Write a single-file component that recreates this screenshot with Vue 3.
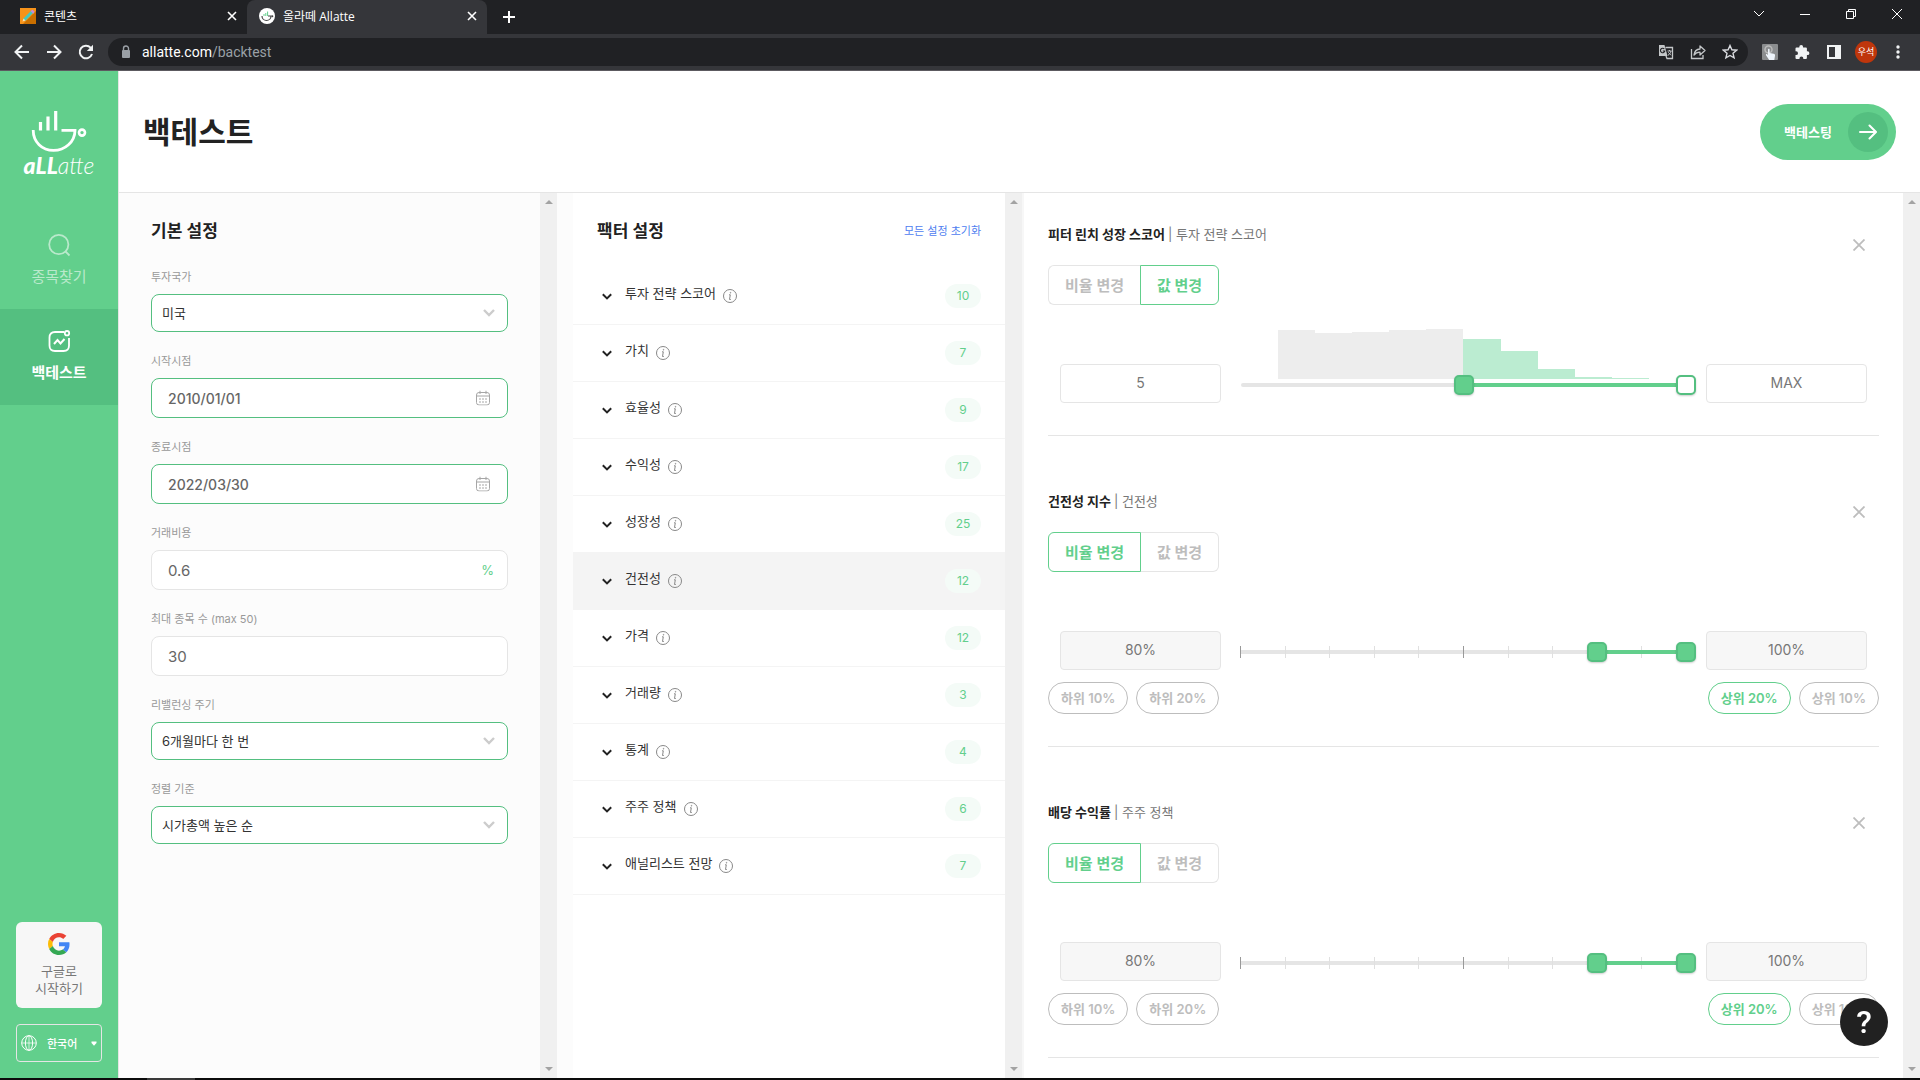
<script setup>
import { ref } from 'vue'

const fields = ref([
  { id: 'country', label: '투자국가', type: 'select', value: '미국' },
  { id: 'start', label: '시작시점', type: 'date', value: '2010/01/01' },
  { id: 'end', label: '종료시점', type: 'date', value: '2022/03/30' },
  { id: 'fee', label: '거래비용', type: 'number', value: '0.6', unit: '%' },
  { id: 'count', label: '최대 종목 수 (max 50)', type: 'number', value: '30' },
  { id: 'rebalance', label: '리밸런싱 주기', type: 'select', value: '6개월마다 한 번' },
  { id: 'sort', label: '정렬 기준', type: 'select', value: '시가총액 높은 순' },
])

const factors = [
  { name: '투자 전략 스코어', count: 10 },
  { name: '가치', count: 7 },
  { name: '효율성', count: 9 },
  { name: '수익성', count: 17 },
  { name: '성장성', count: 25 },
  { name: '건전성', count: 12, active: true },
  { name: '가격', count: 12 },
  { name: '거래량', count: 3 },
  { name: '통계', count: 4 },
  { name: '주주 정책', count: 6 },
  { name: '애널리스트 전망', count: 7 },
]

const filters = ref([
  {
    id: 'lynch', name: '피터 린치 성장 스코어', group: '투자 전략 스코어', mode: 'value',
    low: 50, high: 100, lowText: '5', highText: 'MAX',
    bars: [49, 46, 47, 49, 50, 40, 28, 10, 2, 1],
  },
  { id: 'health', name: '건전성 지수', group: '건전성', mode: 'ratio', low: 80, high: 100, lowText: '80%', highText: '100%' },
  { id: 'dividend', name: '배당 수익률', group: '주주 정책', mode: 'ratio', low: 80, high: 100, lowText: '80%', highText: '100%' },
])
</script>

<template>
  <div class="window">
    <div class="tabstrip">
      <div class="tab">
        <svg class="favicon" viewBox="0 0 16 16">
          <rect width="16" height="16" fill="#f7931a" />
          <path d="M16 3v13H3z" fill="#c96f00" />
          <path d="M4 12 12 4" stroke="#45c8c0" stroke-width="3" />
          <path d="m10.500 3 2-1.200 2 2-1.200 2z" fill="#c48be0" />
          <path d="m2.500 13.500 1-3 2 2z" fill="#fbe2b5" />
        </svg>
        <span class="tab-title">콘텐츠</span>
        <button class="tab-close" aria-label="탭 닫기"><svg width="10" height="10" viewBox="0 0 10 10"><path d="m1 1 8 8M9 1 1 9" /></svg></button>
      </div>
      <div class="tab current">
        <svg class="favicon" viewBox="0 0 16 16">
          <circle cx="8" cy="8" r="8" fill="#fff" />
          <path d="M3 8a4.500 4.500 0 0 0 9 0H9" fill="none" stroke="#444" stroke-width="1.200" />
          <path d="M5 8V6M6.800 8V5M8.600 8V3.500" stroke="#62cf8c" stroke-width="1" />
          <circle cx="13.300" cy="8.300" r="1" fill="#444" />
        </svg>
        <span class="tab-title">올라떼 Allatte</span>
        <button class="tab-close" aria-label="탭 닫기"><svg width="10" height="10" viewBox="0 0 10 10"><path d="m1 1 8 8M9 1 1 9" /></svg></button>
      </div>
      <button class="tab-new" aria-label="새 탭"><svg width="12" height="12" viewBox="0 0 12 12"><path d="M6 0v12M0 6h12" stroke="#fff" stroke-width="2" /></svg></button>
      <div class="window-controls">
        <button aria-label="탭 검색"><svg width="12" height="12" viewBox="0 0 12 12"><path d="m1 3 5 5 5-5" /></svg></button>
        <button aria-label="최소화"><svg width="12" height="12" viewBox="0 0 12 12"><path d="M1 6.500h10" /></svg></button>
        <button aria-label="이전 크기로"><svg width="12" height="12" viewBox="0 0 12 12"><path d="M1.500 3.500h7v7h-7zM3.500 3V1.500h7v7H9" /></svg></button>
        <button aria-label="닫기"><svg width="12" height="12" viewBox="0 0 12 12"><path d="m1 1 10 10M11 1 1 11" /></svg></button>
      </div>
    </div>

    <div class="toolbar">
      <button aria-label="뒤로"><svg width="16" height="16" viewBox="0 0 16 16"><path d="M15 8H2M8 1.500 1.500 8 8 14.500" class="stroke-w" /></svg></button>
      <button aria-label="앞으로"><svg width="16" height="16" viewBox="0 0 16 16"><path d="M1 8h13M8 1.500 14.500 8 8 14.500" class="stroke-w" /></svg></button>
      <button aria-label="새로고침"><svg width="16" height="16" viewBox="0 0 16 16"><path d="M14 10A6.300 6.300 0 1 1 12.600 3.600L14 5" class="stroke-w" /><path d="M15 .800V7H8.800z" fill="#f1f3f4" /></svg></button>
      <div class="address">
        <svg width="16" height="16" viewBox="0 0 16 16"><rect x="4" y="6" width="8" height="8" rx="1" fill="#9aa0a6" /><path d="M5.500 6.500V4.500a2.500 2.500 0 0 1 5 0v2" fill="none" stroke="#9aa0a6" stroke-width="1.400" /></svg>
        <span class="url"><b>allatte.com</b>/backtest</span>
        <svg width="16" height="16" viewBox="0 0 16 16"><path d="M1 1h5.500L9.500 12H1z" fill="#c4c7c9" /><path d="M7.500 3.500h7v11H9l-1-2.500" fill="none" stroke="#c4c7c9" stroke-width="1.300" /><path d="M6.300 5A2.200 2.200 0 1 0 6.800 7H4.800" fill="none" stroke="#202124" stroke-width="1.100" /><path d="M9.500 7h4M11.500 6v1M13 7c-.500 2-1.500 3.300-3 4.300M10.300 8.300l2.700 3" fill="none" stroke="#c4c7c9" /></svg>
        <svg width="16" height="16" viewBox="0 0 16 16"><path d="M1.500 5v9.500H13V11" fill="none" stroke="#c4c7c9" stroke-width="1.300" /><path d="M10 2v3C6.500 5.200 4.500 7.300 4 11c1.500-2 3.300-2.800 6-2.800V11l5-4.500z" fill="none" stroke="#c4c7c9" stroke-width="1.300" stroke-linejoin="round" /></svg>
        <svg width="16" height="16" viewBox="0 0 16 16"><path d="m8 1.500 1.900 4.300 4.700.4-3.600 3.100 1.100 4.600L8 11.500l-4.100 2.400L5 9.300 1.400 6.200l4.700-.4z" fill="none" stroke="#dadce0" stroke-width="1.400" /></svg>
      </div>
      <div class="extensions">
        <button aria-label="확장"><svg width="16" height="16" viewBox="0 0 16 16"><rect width="16" height="16" rx="1" fill="#8b8d8f" /><circle cx="6.500" cy="5.500" r="3.500" fill="none" stroke="#bbb" stroke-width="1.500" /><path d="M6 5.500c0-1 1.600-1 1.600 0V9l4 .8c1.300.3 1.600 1 1.400 2L12.300 16H7.200L4 11.300c-.4-1 .5-1.500 1.200-1l.8.700z" fill="#eef4fb" /></svg></button>
        <button aria-label="확장 프로그램"><svg width="16" height="16" viewBox="0 0 16 16"><path d="M1.500 4.500A1 1 0 0 1 2.500 3.500H5.300V2.900a1.900 1.900 0 0 1 3.800 0v.6h2.800a1 1 0 0 1 1 1v2.800h.6a1.900 1.900 0 0 1 0 3.800h-.6V14a1 1 0 0 1-1 1H9.300v-.7a1.900 1.900 0 0 0-3.800 0v.7h-3a1 1 0 0 1-1-1v-2.900h.6a1.900 1.900 0 0 0 0-3.800h-.6z" fill="#f1f3f4" /></svg></button>
        <button aria-label="측면 패널"><svg width="16" height="16" viewBox="0 0 16 16"><path d="M1 1h14v14H1zM3 3v10h6V3z" fill="#f1f3f4" fill-rule="evenodd" /></svg></button>
        <button class="avatar">우석</button>
        <button aria-label="메뉴"><svg width="16" height="16" viewBox="0 0 16 16" fill="#f1f3f4"><circle cx="8" cy="3" r="1.700" /><circle cx="8" cy="8" r="1.700" /><circle cx="8" cy="13" r="1.700" /></svg></button>
      </div>
    </div>

    <div class="app">
      <aside class="sidebar">
        <a class="logo" href="#">
          <svg width="56" height="42" viewBox="31 110 56 42" fill="none" stroke="#fff">
            <path d="M40.500 122v8.500M48 116.500v14M55.700 111v19.500" stroke-width="3.200" />
            <path d="M33.200 130C33.200 142 42 150.400 53.500 150.400S74.800 142 75 130.400H61.500" stroke-width="2.800" />
            <circle cx="82" cy="132.600" r="3" stroke-width="2.600" />
          </svg>
          <span class="wordmark"><b>aLL</b>atte</span>
        </a>
        <nav>
          <a class="nav-item" href="#">
            <svg width="24" height="24" viewBox="0 0 24 24" fill="none" stroke="currentColor" stroke-width="1.800"><circle cx="11.800" cy="11.500" r="9.600" /><path d="m18.500 18.500 4 4" /></svg>
            종목찾기
          </a>
          <a class="nav-item active" href="#">
            <svg width="24" height="24" viewBox="0 0 24 24" fill="none" stroke="currentColor" stroke-width="1.800"><path d="M17 3H8Q2.500 3 2.500 8.500v8Q2.500 22 8 22h8.500q5.500 0 5.500-5.500V9" /><circle cx="20" cy="4.200" r="2.200" /><path d="m7 15 3.500-4 3 3.500 4-4.500" stroke-width="2" /></svg>
            백테스트
          </a>
        </nav>
        <div class="side-bottom">
          <button class="google">
            <svg width="22" height="22" viewBox="0 0 48 48"><path fill="#EA4335" d="M24 9.500c3.540 0 6.710 1.220 9.210 3.600l6.850-6.850C35.900 2.380 30.470 0 24 0 14.620 0 6.510 5.380 2.560 13.220l7.980 6.190C12.430 13.720 17.740 9.500 24 9.500z" /><path fill="#4285F4" d="M46.980 24.550c0-1.570-.15-3.090-.38-4.550H24v9.020h12.940c-.58 2.960-2.260 5.480-4.780 7.180l7.730 6c4.510-4.180 7.090-10.360 7.090-17.650z" /><path fill="#FBBC05" d="M10.530 28.590c-.48-1.450-.76-2.990-.76-4.590s.27-3.140.76-4.590l-7.980-6.190C.92 16.460 0 20.120 0 24c0 3.880.92 7.540 2.560 10.780l7.970-6.190z" /><path fill="#34A853" d="M24 48c6.480 0 11.930-2.130 15.890-5.810l-7.730-6c-2.150 1.450-4.920 2.300-8.160 2.300-6.260 0-11.570-4.220-13.470-9.910l-7.980 6.190C6.510 42.620 14.620 48 24 48z" /></svg>
            <span>구글로<br />시작하기</span>
          </button>
          <button class="language">
            <svg width="16" height="16" viewBox="0 0 16 16" fill="none" stroke="#fff"><circle cx="8" cy="8" r="7.300" /><ellipse cx="8" cy="8" rx="3.600" ry="7.300" /><path d="M8 .7v14.600M.7 8h14.600" stroke-width=".7" /></svg>
            <span>한국어</span>
            <svg width="6" height="5" viewBox="0 0 6 5"><path d="M.5.500h5v1.500L3 4.800.5 2z" fill="#fff" /></svg>
          </button>
        </div>
      </aside>

      <main>
        <header class="page-head">
          <h1>백테스트</h1>
          <button class="run">
            백테스팅
            <span class="run-icon"><svg width="18" height="16" viewBox="0 0 18 16" fill="none" stroke="#fff" stroke-width="2" stroke-linecap="round" stroke-linejoin="round"><path d="M1 8h15.500M10.500 1.500 17 8l-6.500 6.500" /></svg></span>
          </button>
        </header>

        <div class="columns">
          <section class="basic">
            <form class="basic-body" @submit.prevent>
              <h2>기본 설정</h2>
              <div v-for="f in fields" :key="f.id" class="field">
                <label :for="f.id">{{ f.label }}</label>
                <div class="control" :class="f.type">
                  <select v-if="f.type === 'select'" :id="f.id" v-model="f.value">
                    <option>{{ f.value }}</option>
                  </select>
                  <input v-else :id="f.id" v-model="f.value" type="text" />
                  <svg v-if="f.type === 'select'" class="mark caret" width="12" height="8" viewBox="0 0 12 8"><path d="m1 1 5 5 5-5" fill="none" stroke="#ccc" stroke-width="2.400" /></svg>
                  <svg v-else-if="f.type === 'date'" class="mark cal" width="14" height="15" viewBox="0 0 14 15" fill="none" stroke="#a6a6a6"><rect x=".5" y="2" width="13" height="12.500" rx="2.500" /><path d="M.5 5.500h13M4 0v3.500M10 0v3.500" /><path d="M3 8.500h8M3 11.500h8" stroke-dasharray="2 1" /></svg>
                  <span v-else-if="f.unit" class="mark unit">{{ f.unit }}</span>
                </div>
              </div>
            </form>
            <div class="scroll"><svg width="8" height="4" viewBox="0 0 8 4"><path d="M0 4 4 0l4 4z" /></svg><svg width="8" height="4" viewBox="0 0 8 4"><path d="m0 0 4 4 4-4z" /></svg></div>
          </section>

          <section class="factors">
            <div class="factor-body">
              <div class="factor-head">
                <h2>팩터 설정</h2>
                <a href="#">모든 설정 초기화</a>
              </div>
              <ul>
                <li v-for="f in factors" :key="f.name" :class="{ active: f.active }">
                  <svg class="chev" width="10" height="7" viewBox="0 0 10 7"><path d="m.8 1.200 4.200 4.200 4.200-4.200" fill="none" stroke="#222" stroke-width="2" /></svg>
                  <span class="factor-name">{{ f.name }}</span>
                  <svg class="info" width="14" height="14" viewBox="0 0 14 14" fill="none" stroke="#888"><circle cx="7" cy="7" r="6.500" /><path d="M6 5.800h1.300L6.500 10.500h1.300" /><circle cx="7.500" cy="3.700" r=".5" fill="#888" stroke-width=".4" /></svg>
                  <span class="badge">{{ f.count }}</span>
                </li>
              </ul>
            </div>
            <div class="scroll"><svg width="8" height="4" viewBox="0 0 8 4"><path d="M0 4 4 0l4 4z" /></svg><svg width="8" height="4" viewBox="0 0 8 4"><path d="m0 0 4 4 4-4z" /></svg></div>
          </section>

          <section class="filters">
            <div class="filter-body">
              <article v-for="f in filters" :key="f.id">
                <h3>{{ f.name }} <span>| {{ f.group }}</span></h3>
                <button class="remove" aria-label="삭제"><svg width="12" height="12" viewBox="0 0 12 12"><path d="m.5.500 11 11M11.500.500l-11 11" stroke="#bdbdbd" stroke-width="1.800" /></svg></button>
                <div class="modes">
                  <button :class="{ on: f.mode === 'ratio' }" @click="f.mode = 'ratio'">비율 변경</button>
                  <button :class="{ on: f.mode === 'value' }" @click="f.mode = 'value'">값 변경</button>
                </div>
                <div class="range">
                  <input v-model="f.lowText" class="bound" :class="{ tinted: !f.bars }" type="text" aria-label="최솟값" />
                  <div class="slider" :class="{ round: f.bars }">
                    <div v-if="f.bars" class="bars">
                      <i v-for="(h, i) in f.bars" :key="i" :class="{ inside: i >= 5 }" :style="{ height: h + 'px' }"></i>
                    </div>
                    <div v-else class="ticks"><i v-for="n in 11" :key="n" :class="{ major: n === 1 || n === 6 }"></i></div>
                    <div class="fill" :style="{ left: f.low + '%', right: 100 - f.high + '%' }"></div>
                    <input v-model="f.low" class="handle" type="range" min="0" max="100" aria-label="하한" />
                    <input v-model="f.high" class="handle" :class="{ open: f.bars }" type="range" min="0" max="100" aria-label="상한" />
                  </div>
                  <input v-model="f.highText" class="bound" :class="{ tinted: !f.bars }" type="text" aria-label="최댓값" />
                </div>
                <div v-if="!f.bars" class="chips">
                  <button>하위 10%</button>
                  <button>하위 20%</button>
                  <button class="on push">상위 20%</button>
                  <button>상위 10%</button>
                </div>
              </article>
            </div>
            <div class="scroll"><svg width="8" height="4" viewBox="0 0 8 4"><path d="M0 4 4 0l4 4z" /></svg><svg width="8" height="4" viewBox="0 0 8 4"><path d="m0 0 4 4 4-4z" /></svg></div>
          </section>
        </div>
      </main>
    </div>
    <button class="help" aria-label="도움말">?</button>
    <div class="taskbar"><span></span></div>
  </div>
</template>

<style>
body {
  margin: 0;
}
</style>

<style scoped>
* {
  box-sizing: border-box;
}
.window {
  display: flex;
  flex-direction: column;
  min-height: 100vh;
  font-family: Inter, "Noto Sans CJK KR", sans-serif;
  font-size: 13px;
  color: #222;
  background: #fff;
}
button {
  padding: 0;
  border: 0;
  background: none;
  font: inherit;
  color: inherit;
  cursor: pointer;
}
svg {
  display: block;
  flex: none;
}
a {
  color: inherit;
  text-decoration: none;
}
h1, h2, h3, ul {
  margin: 0;
  padding: 0;
}

/* browser frame */
.tabstrip {
  display: flex;
  height: 34px;
  padding-left: 8px;
  background: #202124;
  color: #fff;
}
.tab {
  display: flex;
  align-items: center;
  width: 239px;
  padding: 0 8px 2px 12px;
  font-family: "Open Sans", "Noto Sans CJK KR", sans-serif;
  font-size: 12px;
}
.tab.current {
  width: 240px;
  border-radius: 8px 8px 0 0;
  background: #35363a;
}
.favicon {
  width: 16px;
  height: 16px;
}
.tab-title {
  flex: 1;
  margin-left: 8px;
}
.tab-close {
  width: 12px;
}
.tab-close svg {
  stroke: #fff;
  stroke-width: 1.6;
}
.tab-new {
  margin-left: 16px;
}
.window-controls {
  display: flex;
  height: 28px;
  margin-left: auto;
}
.window-controls button {
  display: flex;
  align-items: center;
  justify-content: center;
  width: 46px;
}
.window-controls svg {
  fill: none;
  stroke: #fff;
}
.toolbar {
  display: flex;
  align-items: center;
  gap: 16px;
  height: 37px;
  padding: 0 14px;
  border-bottom: 1px solid #5c5a60;
  background: #35363a;
}
.stroke-w {
  fill: none;
  stroke: #f1f3f4;
  stroke-width: 2;
}
.address {
  display: flex;
  flex: 1;
  align-items: center;
  gap: 16px;
  height: 28px;
  margin: 0 -2px;
  padding: 0 10px;
  border-radius: 14px;
  background: #202124;
  font-family: Roboto, "Noto Sans CJK KR", sans-serif;
  font-size: 14px;
  color: #9aa0a6;
}
.url {
  flex: 1;
  margin-left: -8px;
}
.url b {
  font-weight: 400;
  color: #fff;
}
.extensions {
  display: flex;
  align-items: center;
  gap: 16px;
}
.extensions .avatar {
  width: 22px;
  height: 22px;
  margin: 0 -3px;
  border-radius: 50%;
  background: #bf360c;
  color: #fff;
  font-size: 9px;
  line-height: 22px;
}

/* sidebar */
.app {
  display: flex;
  flex: 1;
}
.sidebar {
  display: flex;
  flex-direction: column;
  width: 119px;
  border-right: 1px solid #e5e5e5;
  background: #62cf8c;
  color: #fff;
}
.logo {
  display: flex;
  flex-direction: column;
  align-items: center;
  height: 142px;
  padding-top: 39px;
}
.wordmark {
  font-family: Lato, sans-serif;
  font-size: 23px;
  font-style: italic;
  font-weight: 300;
  line-height: 26px;
}
.wordmark b {
  font-weight: 900;
}
.nav-item {
  display: flex;
  flex-direction: column;
  align-items: center;
  gap: 8px;
  height: 96px;
  padding-top: 20px;
  font-size: 15px;
  line-height: 24px;
  color: #b9e9cb;
}
.nav-item.active {
  background: #54bf80;
  color: #fff;
  font-weight: 700;
}
.side-bottom {
  display: flex;
  flex-direction: column;
  gap: 16px;
  margin-top: auto;
  padding: 0 16px 16px;
}
.google {
  display: flex;
  flex-direction: column;
  align-items: center;
  gap: 8px;
  height: 86px;
  padding-top: 11px;
  border-radius: 6px;
  background: #f7f7f7;
  color: #777;
  font-size: 13px;
  line-height: 17px;
}
.language {
  display: flex;
  align-items: center;
  height: 38px;
  padding: 0 4px;
  border: 1px solid #e5e5e5;
  border-radius: 4px;
  font-size: 11px;
  font-weight: 500;
}
.language span {
  flex: 1;
  padding-left: 10px;
  text-align: left;
}

/* header */
main {
  display: flex;
  flex: 1;
  flex-direction: column;
  min-width: 0;
}
.page-head {
  display: flex;
  align-items: center;
  justify-content: space-between;
  height: 122px;
  padding: 0 24px;
  border-bottom: 1px solid #e5e5e5;
}
h1 {
  padding-bottom: 4px;
  font-size: 30px;
  font-weight: 700;
}
.run {
  display: flex;
  align-items: center;
  justify-content: space-between;
  width: 136px;
  height: 56px;
  padding: 0 8px 0 24px;
  border-radius: 28px;
  background: #62cf8c;
  color: #fff;
  font-weight: 700;
}
.run-icon {
  display: flex;
  align-items: center;
  justify-content: center;
  width: 40px;
  height: 40px;
  border-radius: 50%;
  background: #54bf80;
}

/* columns */
.columns {
  display: flex;
  flex: 1;
  background: #fcfcfc;
}
.columns > section {
  display: flex;
}
.scroll {
  display: flex;
  flex-direction: column;
  align-items: center;
  justify-content: space-between;
  width: 17px;
  padding: 7px 0;
  background: #f0f0f0;
}
.scroll path {
  fill: #a3a3a3;
}
h2 {
  font-size: 17px;
  font-weight: 600;
  line-height: 28px;
}
.basic {
  width: 438px;
  margin-right: 16px;
}
.basic-body {
  display: flex;
  flex: 1;
  flex-direction: column;
  gap: 20px;
  padding: 24px 32px;
}
.basic-body h2 {
  margin-bottom: 3px;
}
.field label {
  display: block;
  margin-bottom: 8px;
  font-size: 11px;
  line-height: 18px;
  color: #999;
}
.control {
  position: relative;
}
.control select,
.control input {
  display: block;
  width: 100%;
  height: 40px;
  padding: 0 16px;
  border: 1px solid #54bf80;
  border-radius: 8px;
  outline: 0;
  background: #fff;
  font: inherit;
  font-size: 14px;
  font-weight: 500;
  color: #666;
  appearance: none;
}
.control select {
  height: 38px;
  padding: 0 10px;
  font-size: 13px;
  font-weight: 400;
  color: #333;
}
.control.number input {
  border-color: #e5e5e5;
  font-size: 15px;
  font-weight: 400;
}
.mark {
  position: absolute;
  top: 50%;
  right: 13px;
  transform: translateY(-50%);
  pointer-events: none;
}
.mark.cal {
  right: 18px;
}
.mark.unit {
  right: 14px;
  color: #62cf8c;
}
.factors {
  width: 451px;
  border-right: 2px solid #f7f7f7;
  background: #fff;
}
.factor-body {
  flex: 1;
}
.factor-head {
  display: flex;
  align-items: center;
  justify-content: space-between;
  padding: 24px 24px 23px;
}
.factor-head a {
  padding-bottom: 2px;
  font-size: 11px;
  color: #4f80f0;
}
li {
  display: flex;
  align-items: center;
  height: 57px;
  padding: 0 24px 0 29px;
  border-bottom: 1px solid #f4f4f4;
}
li.active {
  background: #f4f4f4;
}
.factor-name {
  margin: 0 7px 6px 13px;
  line-height: 20px;
  color: #333;
}
.badge {
  width: 36px;
  margin-left: auto;
  border-radius: 12px;
  background: #f4fbf7;
  color: #62cf8c;
  font-size: 12px;
  line-height: 24px;
  text-align: center;
}

/* selected filters */
.filters {
  flex: 1;
  min-width: 0;
  background: #fff;
}
.filter-body {
  flex: 1;
  min-width: 0;
  padding: 0 24px;
}
article {
  position: relative;
  padding: 55px 0 32px;
  border-bottom: 1px solid #e5e5e5;
}
article:first-child {
  padding-top: 31px;
}
h3 {
  font-size: 13px;
  font-weight: 700;
  line-height: 20px;
}
h3 span {
  font-weight: 400;
  color: #777;
}
.remove {
  position: absolute;
  top: 70px;
  right: 14px;
}
article:first-child .remove {
  top: 46px;
}
.modes {
  display: flex;
  margin: 21px 0 59px;
}
.modes button {
  height: 40px;
  padding: 0 16px 2px;
  border: 1px solid #e5e5e5;
  border-radius: 6px 0 0 6px;
  color: #bdbdbd;
  font-size: 15px;
  font-weight: 600;
}
.modes button + button {
  border-radius: 0 6px 6px 0;
}
.modes button:first-child {
  border-right-width: 0;
}
.modes button + button.on,
.modes button.on {
  border-color: #62cf8c;
  color: #62cf8c;
}
.modes button.on:first-child {
  border-right-width: 1px;
}
.modes button.on + button {
  border-left-width: 0;
}
.range {
  display: flex;
  align-items: center;
  gap: 20px;
  padding: 0 12px;
}
.bound {
  width: 161px;
  height: 39px;
  padding: 0 0 2px;
  border: 1px solid #e5e5e5;
  border-radius: 4px;
  background: #fff;
  font: inherit;
  font-size: 14px;
  color: #777;
  text-align: center;
}
.bound.tinted {
  background: #f7f7f7;
}
.slider {
  position: relative;
  flex: 1;
  height: 4px;
  margin-top: 2px;
  background: #e5e5e5;
}
.slider.round {
  border-radius: 2px;
}
.bars {
  position: absolute;
  right: 8.333%;
  bottom: 8px;
  left: 8.333%;
  display: flex;
  align-items: flex-end;
}
.bars i {
  flex: 1;
  background: #ededed;
}
.bars i.inside {
  background: #bbecd1;
}
.ticks {
  position: absolute;
  top: -4px;
  right: -1px;
  left: -1px;
  display: flex;
  justify-content: space-between;
}
.ticks i {
  width: 1px;
  height: 12px;
  background: #e0e0e0;
}
.ticks i.major {
  background: #999;
}
.fill {
  position: absolute;
  top: 0;
  bottom: 0;
  background: #62cf8c;
}
.handle {
  position: absolute;
  top: -8px;
  left: -10px;
  width: calc(100% + 20px);
  height: 20px;
  margin: 0;
  background: none;
  appearance: none;
  pointer-events: none;
}
.handle::-webkit-slider-thumb {
  box-sizing: border-box;
  width: 20px;
  height: 20px;
  border: 2px solid #54bf80;
  border-radius: 5px;
  background: #62cf8c;
  box-shadow: 0 1px 2px rgba(0, 0, 0, 0.2);
  appearance: none;
  pointer-events: auto;
}
.handle.open::-webkit-slider-thumb {
  background: #fff;
}
.chips {
  display: flex;
  gap: 8px;
  margin-top: 12px;
}
.chips button {
  height: 32px;
  padding: 0 12px 2px;
  border: 1px solid #bdbdbd;
  border-radius: 16px;
  color: #bdbdbd;
  font-size: 13px;
  font-weight: 600;
}
.chips button.on {
  border-color: #62cf8c;
  color: #62cf8c;
}
.chips .push {
  margin-left: auto;
}
.help {
  position: fixed;
  right: 32px;
  bottom: 34px;
  width: 48px;
  height: 48px;
  border-radius: 50%;
  background: #212121;
  color: #fff;
  font-family: Roboto, sans-serif;
  font-size: 32px;
  font-weight: 500;
  line-height: 48px;
}
.taskbar {
  height: 2px;
  padding-left: 147px;
  background: #0c0c0c;
}
.taskbar span {
  display: block;
  width: 48px;
  height: 2px;
  background: #3a3a3a;
}
</style>
